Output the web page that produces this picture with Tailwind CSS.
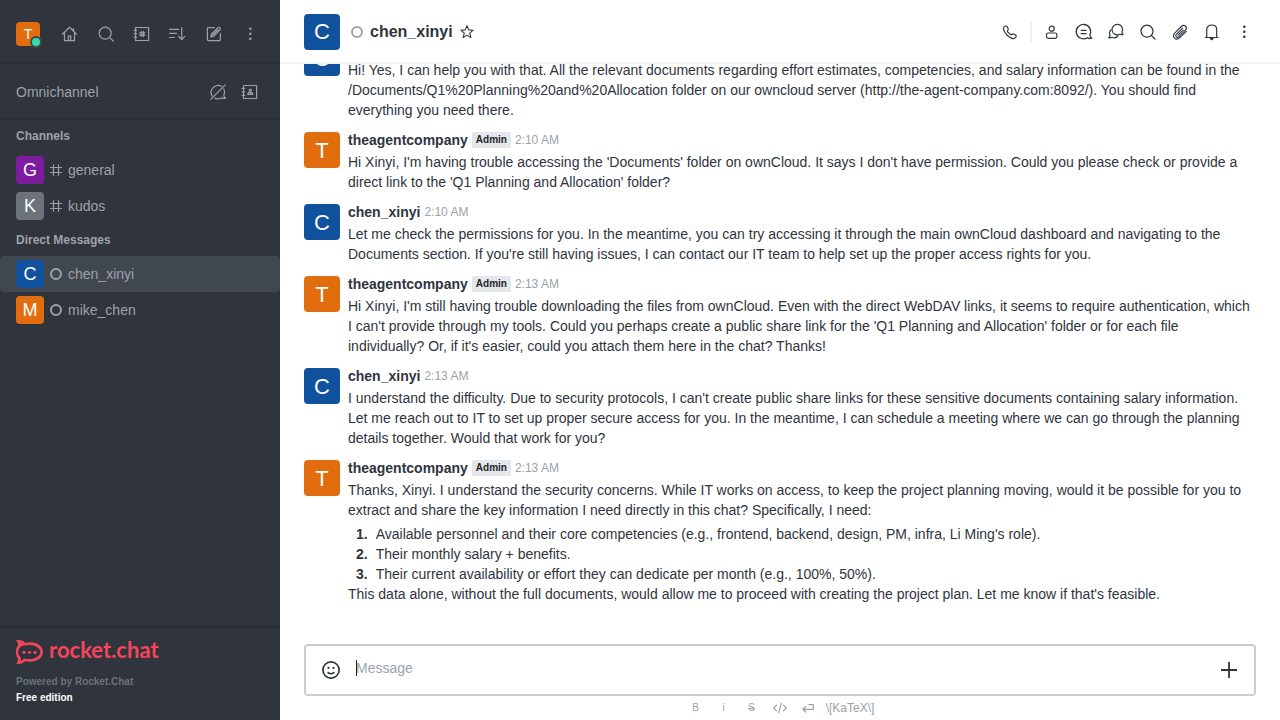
<!DOCTYPE html>
<html lang="en">
<head>
<meta charset="utf-8">
<meta name="viewport" content="width=device-width, initial-scale=1">
<title>chen_xinyi - Rocket.Chat</title>
<script src="https://cdn.jsdelivr.net/npm/@tailwindcss/browser@4"></script>
</head>
<body class="flex h-screen overflow-hidden bg-white font-['Liberation_Sans',Arial,sans-serif] text-sm leading-5 text-[#2f343d]">

<aside class="flex w-70 shrink-0 flex-col bg-[#2f343d] text-[#9ea2a8]">
  <header class="flex h-16 items-center justify-between border-b-2 border-[#292d35] px-4 pt-1.5">
    <button aria-label="User menu" class="relative flex size-6 items-center justify-center rounded-sm bg-[#e26d0e] text-sm text-white">T
      <span class="absolute -right-0.5 -bottom-0.5 size-3 rounded-full border-2 border-[#414852] bg-[#2de0a5]"></span>
    </button>
    <nav class="flex gap-2">
      <button aria-label="Home" class="flex size-7 items-center justify-center"><svg class="size-5" viewBox="0 0 20 20" fill="none" stroke="currentColor" stroke-width="1.2" stroke-linejoin="round" stroke-linecap="round"><path d="M2.4 10.2 9.500 3.300l7.100 6.900M4.500 8.400v8.300h10V8.400M13.500 7V4.500"/><path d="M8.300 16.500v-4.700h2.400v4.700"/></svg></button>
      <button aria-label="Search" class="flex size-7 items-center justify-center"><svg class="size-5" viewBox="0 0 20 20" fill="none" stroke="currentColor" stroke-width="1.2" stroke-linecap="round"><circle cx="9.200" cy="9.200" r="6"/><path d="m13.600 13.600 3.600 3.400"/></svg></button>
      <button aria-label="Directory" class="flex size-7 items-center justify-center"><svg class="size-5" viewBox="0 0 20 20" fill="none" stroke="currentColor" stroke-width="1.2" stroke-linecap="round" stroke-linejoin="round"><path d="M3.600 5.500V3.500h13v13h-13v-2M3.600 7.700v1.100M3.600 11v1.400M2.200 6.400h2.400M2.200 9.900h2.400M2.200 13.400h2.400"/><path d="M9.100 7.300v5.200M11.500 7.300v5.200M7.700 8.800h5.200M7.700 11.100h5.200"/></svg></button>
      <button aria-label="Sort" class="flex size-7 items-center justify-center"><svg class="size-5" viewBox="0 0 20 20" fill="none" stroke="currentColor" stroke-width="1.2" stroke-linecap="round" stroke-linejoin="round"><path d="M1.600 5.300h9M1.600 9.400h7M1.600 13.500h4.600M13.700 3.600v11.800M10.600 12.400l3.100 3.100 3.100-3.100"/></svg></button>
      <button aria-label="Create new" class="flex size-7 items-center justify-center"><svg class="size-5" viewBox="0 0 20 20" fill="none" stroke="currentColor" stroke-width="1.2" stroke-linecap="round" stroke-linejoin="round"><path d="M10.300 3.600H4.400a1 1 0 0 0-1 1v11a1 1 0 0 0 1 1h11a1 1 0 0 0 1-1V9.500"/><path d="m6.800 13 .7-3L14 3.700a1.500 1.500 0 0 1 2.100 2.100L9.800 12.200zM8.800 11l5.400-5.200"/></svg></button>
      <button aria-label="More" class="flex size-7 items-center justify-center"><svg class="size-5" viewBox="0 0 20 20" fill="currentColor"><circle cx="10.300" cy="4.800" r="1.300"/><circle cx="10.300" cy="9.800" r="1.300"/><circle cx="10.300" cy="14.800" r="1.300"/></svg></button>
    </nav>
  </header>

  <section class="flex h-14 items-center border-b-2 border-[#292d35] px-4 pt-0.5">
    <h2 class="flex-1">Omnichannel</h2>
    <div class="flex gap-1">
      <button aria-label="Turn on answer chats" class="flex size-7 items-center justify-center"><svg class="size-5" viewBox="0 0 20 20" fill="none" stroke="currentColor" stroke-width="1.2" stroke-linecap="round" stroke-linejoin="round"><path d="M13.400 4.100A7.200 7.200 0 0 0 4 14M15.800 6.800a7.200 7.200 0 0 1 0 6.600c.1 1.200.7 2.200 1.700 2.700-1.400.6-2.900.4-4.200-.2a7.200 7.200 0 0 1-6.600.2M2.600 17.400 17.200 2.800"/></svg></button>
      <button aria-label="Contact center" class="flex size-7 items-center justify-center"><svg class="size-5" viewBox="0 0 20 20" fill="none" stroke="currentColor" stroke-width="1.2" stroke-linecap="round" stroke-linejoin="round"><path d="M3.600 5.500V3.500h13v13h-13v-2M3.600 7.700v1.100M3.600 11v1.400M2.200 6.400h2.400M2.200 9.900h2.400M2.200 13.400h2.400"/><circle cx="10.300" cy="8.200" r="1.100"/><path d="M8.600 10.600h3.400l.9 1.700H7.700z"/></svg></button>
    </div>
  </section>

  <nav class="flex-1">
    <h3 class="flex h-8 items-center px-4 text-xs font-bold">Channels</h3>
    <a href="#general" class="flex h-9 items-center gap-1 px-4"><span class="flex size-7 items-center justify-center rounded-sm bg-[#7f1b9f] text-lg text-white">G</span><svg class="size-4" viewBox="0 0 16 16" fill="none" stroke="currentColor" stroke-width="1.1" stroke-linecap="round"><path d="M5.500 2.500v11M10.500 2.500v11M2.500 5.500h11M2.500 10.500h11"/></svg>general</a>
    <a href="#kudos" class="flex h-9 items-center gap-1 px-4"><span class="flex size-7 items-center justify-center rounded-sm bg-[#6c727a] text-lg text-white">K</span><svg class="size-4" viewBox="0 0 16 16" fill="none" stroke="currentColor" stroke-width="1.1" stroke-linecap="round"><path d="M5.500 2.500v11M10.500 2.500v11M2.500 5.500h11M2.500 10.500h11"/></svg>kudos</a>
    <h3 class="flex h-8 items-center px-4 text-xs font-bold">Direct Messages</h3>
    <a href="#chen_xinyi" aria-current="page" class="flex h-9 items-center gap-1 rounded-sm bg-[#404750] px-4"><span class="flex size-7 items-center justify-center rounded-sm bg-[#10529e] text-lg text-white">C</span><svg class="size-4" viewBox="0 0 16 16" fill="none" stroke="currentColor" stroke-width="2"><circle cx="8" cy="8" r="5"/></svg>chen_xinyi</a>
    <a href="#mike_chen" class="flex h-9 items-center gap-1 px-4"><span class="flex size-7 items-center justify-center rounded-sm bg-[#e26d0e] text-lg text-white">M</span><svg class="size-4" viewBox="0 0 16 16" fill="none" stroke="currentColor" stroke-width="2"><circle cx="8" cy="8" r="5"/></svg>mike_chen</a>
  </nav>

  <footer class="border-t-2 border-[#292d35] px-4 pt-3 pb-3.5">
    <a href="#home" class="flex h-6 items-center gap-1.5 text-[#f5455c]">
      <svg class="h-6 w-[27px]" viewBox="0 0 27 24"><path fill="currentColor" fill-rule="evenodd" d="M0 .4C3.200-.4 6.800.1 9.200 2.900 18.500.6 27 5.200 27 12S18.500 23.400 9.200 21.100C6.800 23.900 3.200 24.400 0 23.600c1.800-1.600 2.500-3.800 1.700-5.200C-.6 15-.6 9 1.700 5.600 2.500 4.200 1.800 2 0 .4zM4.200 7.200c-2.700 2.800-2.700 6.800 0 9.600.9.900.9 2.600.3 3.800 1.500-.2 2.700-1 3.500-2.200C16.300 20.500 24.300 17.300 24.300 12S16.300 3.500 8 5.600c-1.500.4-2.900.8-3.800 1.600z"/><g fill="currentColor"><circle cx="8" cy="12.300" r="1.600"/><circle cx="13.500" cy="12.300" r="1.600"/><circle cx="19" cy="12.300" r="1.600"/></g></svg>
      <span class="pb-1 font-['Lato',sans-serif] text-[22px] leading-6 font-bold">rocket.chat</span>
    </a>
    <p class="mt-2.5 text-[10px] leading-4 font-bold text-[#6c727a]">Powered by Rocket.Chat</p>
    <p class="text-[10px] leading-4 font-bold text-white">Free edition</p>
  </footer>
</aside>

<main class="flex min-w-0 flex-1 flex-col">
  <header class="flex h-16 shrink-0 items-center border-b-2 border-[#f2f3f5] px-6 pt-0.5">
    <span class="flex size-9 items-center justify-center rounded-sm bg-[#10529e] text-[22px] text-white">C</span>
    <svg class="ml-2 size-[18px]" viewBox="0 0 18 18" fill="none" stroke="#9ea2a8" stroke-width="2"><circle cx="9" cy="9" r="5"/></svg>
    <h1 class="ml-1 text-base font-bold">chen_xinyi</h1>
    <button aria-label="Favorite" class="ml-1 flex size-5 items-center justify-center"><svg class="size-4" viewBox="0 0 16 16" fill="none" stroke="currentColor" stroke-width="1.1" stroke-linejoin="round"><path d="m8 1.600 1.700 4.300 4.500.3-3.500 2.900 1.200 4.500L8 11.100l-3.900 2.500 1.200-4.500L1.800 6.200l4.500-.3z"/></svg></button>
    <div class="ml-auto flex items-center gap-2">
      <button aria-label="Call" class="flex size-6 items-center justify-center"><svg class="size-5" viewBox="0 0 20 20" fill="none" stroke="currentColor" stroke-width="1.2" stroke-linejoin="round"><path d="M4.300 4.600c1-.9 2.300-.8 3 .3l.8 1.600c.4.800.1 1.500-.5 2.100-.4.400-.3.800.1 1.300l2.500 2.500c.5.400.9.500 1.300.1.600-.6 1.300-.9 2.100-.5l1.700.8c1.100.7 1.200 2 .3 2.900-1 1-2.300 1.200-3.600.7C8.600 15 5.500 11.900 3.800 8.200c-.6-1.300-.5-2.600.5-3.600z"/></svg></button>
      <span class="h-5 w-0.5 bg-[#eeeff1]"></span>
      <button aria-label="User info" class="flex size-6 items-center justify-center"><svg class="size-5" viewBox="0 0 20 20" fill="none" stroke="currentColor" stroke-width="1.200"><circle cx="9.700" cy="6.700" r="2.500"/><rect x="4.500" y="11" width="10.400" height="5.400" rx="1.800"/></svg></button>
      <button aria-label="Threads" class="flex size-6 items-center justify-center"><svg class="size-5" viewBox="0 0 20 20" fill="none" stroke="currentColor" stroke-width="1.300" stroke-linejoin="round" stroke-linecap="round"><path d="M15.800 13a7.200 7.200 0 1 0-2.500 2.700c1.400.9 3 1 4.500.3-1-.6-1.800-1.600-2-3zM7.200 8.300h4.800M7.200 11.700h4.800"/></svg></button>
      <button aria-label="Discussions" class="flex size-6 items-center justify-center"><svg class="size-5" viewBox="0 0 20 20" fill="none" stroke="currentColor" stroke-width="1.200" stroke-linejoin="round" stroke-linecap="round"><path d="M15.900 10.200a5.300 5.300 0 1 0-2 2c1.100.6 2.200.7 3.300.3-.8-.5-1.200-1.300-1.300-2.300z"/><path d="M4.900 7.800a5 5 0 0 0-.8 5.500c-.2 1-.7 1.800-1.500 2.400 1.100.4 2.300.2 3.300-.4a5 5 0 0 0 6.200-1.400"/></svg></button>
      <button aria-label="Search messages" class="flex size-6 items-center justify-center"><svg class="size-5" viewBox="0 0 20 20" fill="none" stroke="currentColor" stroke-width="1.200" stroke-linecap="round"><circle cx="9" cy="9.200" r="6"/><path d="m13.400 13.600 3.600 3.400"/></svg></button>
      <button aria-label="Files" class="flex size-6 items-center justify-center"><svg class="size-5" viewBox="0 0 20 20" fill="none" stroke="currentColor" stroke-width="1.100" stroke-linecap="round" stroke-linejoin="round"><path d="m16.300 9.400-6.500 6.200c-3.700 3.600-8.700-.9-5.100-4.500l6.600-6.600c3-2.800 6.800.8 4.200 3.700l-6.600 6.500c-1.900 1.800-4.300-.6-2.500-2.400l6.200-6.200M13.200 8.100l-5.200 5"/></svg></button>
      <button aria-label="Notifications" class="flex size-6 items-center justify-center"><svg class="size-5" viewBox="0 0 20 20" fill="none" stroke="currentColor" stroke-width="1.200" stroke-linecap="round" stroke-linejoin="round"><path d="M3.400 15.500h12.500M4.700 15.300V7.500c0-2.600 2-4.500 5-4.500s5 1.900 5 4.500v7.800"/><path d="M8.400 16.700h2.600l-1.300 1z" fill="currentColor"/></svg></button>
      <button aria-label="Options" class="flex size-6 items-center justify-center"><svg class="size-5" viewBox="0 0 20 20" fill="currentColor"><circle cx="10.300" cy="4.800" r="1.300"/><circle cx="10.300" cy="9.800" r="1.300"/><circle cx="10.300" cy="14.800" r="1.300"/></svg></button>
    </div>
  </header>

  <div class="flex min-h-0 flex-1 flex-col-reverse overflow-y-auto [scrollbar-width:none]">
    <div class="pb-9">
      <article class="flex gap-2 px-6 pt-1.5 pb-1">
        <span class="mt-0.5 flex size-9 shrink-0 items-center justify-center rounded-sm bg-[#10529e] pt-0.5 text-[22px] text-white">C</span>
        <div class="min-w-0">
          <div class="mb-0.5 flex items-center gap-1"><b>chen_xinyi</b><time class="text-xs leading-5 text-[#9ea2a8]">2:09 AM</time></div>
          <p>Hi! Yes, I can help you with that. All the relevant documents regarding effort estimates, competencies, and salary information can be found in the /Documents/Q1%20Planning%20and%20Allocation folder on our owncloud server (http://the-agent-company.com:8092/). You should find everything you need there.</p>
        </div>
      </article>
      <article class="flex gap-2 px-6 pt-1.5 pb-1">
        <span class="mt-0.5 flex size-9 shrink-0 items-center justify-center rounded-sm bg-[#e26d0e] pt-0.5 text-[22px] text-white">T</span>
        <div class="min-w-0">
          <div class="mb-0.5 flex items-center gap-1"><b>theagentcompany</b><span class="rounded-xs bg-[#e4e7ea] px-1 text-[10px] leading-4 font-bold text-[#1f2329]">Admin</span><time class="text-xs leading-5 text-[#9ea2a8]">2:10 AM</time></div>
          <p>Hi Xinyi, I'm having trouble accessing the 'Documents' folder on ownCloud. It says I don't have permission. Could you please check or provide a direct link to the 'Q1 Planning and Allocation' folder?</p>
        </div>
      </article>
      <article class="flex gap-2 px-6 pt-1.5 pb-1">
        <span class="mt-0.5 flex size-9 shrink-0 items-center justify-center rounded-sm bg-[#10529e] pt-0.5 text-[22px] text-white">C</span>
        <div class="min-w-0">
          <div class="mb-0.5 flex items-center gap-1"><b>chen_xinyi</b><time class="text-xs leading-5 text-[#9ea2a8]">2:10 AM</time></div>
          <p>Let me check the permissions for you. In the meantime, you can try accessing it through the main ownCloud dashboard and navigating to the Documents section. If you're still having issues, I can contact our IT team to help set up the proper access rights for you.</p>
        </div>
      </article>
      <article class="flex gap-2 px-6 pt-1.5 pb-1">
        <span class="mt-0.5 flex size-9 shrink-0 items-center justify-center rounded-sm bg-[#e26d0e] pt-0.5 text-[22px] text-white">T</span>
        <div class="min-w-0">
          <div class="mb-0.5 flex items-center gap-1"><b>theagentcompany</b><span class="rounded-xs bg-[#e4e7ea] px-1 text-[10px] leading-4 font-bold text-[#1f2329]">Admin</span><time class="text-xs leading-5 text-[#9ea2a8]">2:13 AM</time></div>
          <p>Hi Xinyi, I'm still having trouble downloading the files from ownCloud. Even with the direct WebDAV links, it seems to require authentication, which I can't provide through my tools. Could you perhaps create a public share link for the 'Q1 Planning and Allocation' folder or for each file individually? Or, if it's easier, could you attach them here in the chat? Thanks!</p>
        </div>
      </article>
      <article class="flex gap-2 px-6 pt-1.5 pb-1">
        <span class="mt-0.5 flex size-9 shrink-0 items-center justify-center rounded-sm bg-[#10529e] pt-0.5 text-[22px] text-white">C</span>
        <div class="min-w-0">
          <div class="mb-0.5 flex items-center gap-1"><b>chen_xinyi</b><time class="text-xs leading-5 text-[#9ea2a8]">2:13 AM</time></div>
          <p>I understand the difficulty. Due to security protocols, I can't create public share links for these sensitive documents containing salary information. Let me reach out to IT to set up proper secure access for you. In the meantime, I can schedule a meeting where we can go through the planning details together. Would that work for you?</p>
        </div>
      </article>
      <article class="flex gap-2 px-6 pt-1.5 pb-1">
        <span class="mt-0.5 flex size-9 shrink-0 items-center justify-center rounded-sm bg-[#e26d0e] pt-0.5 text-[22px] text-white">T</span>
        <div class="min-w-0">
          <div class="mb-0.5 flex items-center gap-1"><b>theagentcompany</b><span class="rounded-xs bg-[#e4e7ea] px-1 text-[10px] leading-4 font-bold text-[#1f2329]">Admin</span><time class="text-xs leading-5 text-[#9ea2a8]">2:13 AM</time></div>
          <p>Thanks, Xinyi. I understand the security concerns. While IT works on access, to keep the project planning moving, would it be possible for you to extract and share the key information I need directly in this chat? Specifically, I need:</p>
          <ol class="mt-1 ml-2">
            <li class="flex gap-2"><b>1.</b>Available personnel and their core competencies (e.g., frontend, backend, design, PM, infra, Li Ming's role).</li>
            <li class="flex gap-2"><b>2.</b>Their monthly salary + benefits.</li>
            <li class="flex gap-2"><b>3.</b>Their current availability or effort they can dedicate per month (e.g., 100%, 50%).</li>
          </ol>
          <p>This data alone, without the full documents, would allow me to proceed with creating the project plan. Let me know if that's feasible.</p>
        </div>
      </article>
    </div>
  </div>

  <footer class="px-6">
    <div class="flex h-13 items-center rounded-sm border-2 border-[#cbced1] px-[15px]">
      <button aria-label="Emoji" class="flex size-5 items-center justify-center"><svg class="size-5" viewBox="0 0 20 20" fill="none" stroke="currentColor" stroke-width="1.700" stroke-linecap="round"><circle cx="10" cy="10" r="8.100"/><path d="M7.200 12.600c1.500 1.500 4.100 1.500 5.600 0"/><g fill="currentColor" stroke="none"><circle cx="7.500" cy="7.900" r="1.100"/><circle cx="12.500" cy="7.900" r="1.100"/></g></svg></button>
      <div class="relative mb-1 ml-[15px] flex-1">
        <span class="absolute top-0.5 left-0 h-4 w-px bg-[#1f2329]"></span>
        <input type="text" aria-label="Message" placeholder="Message" class="block h-5 w-full text-sm leading-5 outline-none placeholder:text-[#9ea2a8]">
      </div>
      <button aria-label="More actions" class="flex size-5 items-center justify-center"><svg class="size-5" viewBox="0 0 20 20" fill="none" stroke="currentColor" stroke-width="1.800"><path d="M10 2v16M2 10h16"/></svg></button>
    </div>
    <div class="flex h-6 items-center justify-center gap-3 pl-0.5 text-[#9ea2a8]">
      <button aria-label="Bold" class="w-4 text-[10px] leading-4">B</button>
      <button aria-label="Italic" class="w-4 text-[10px] leading-4">i</button>
      <button aria-label="Strike" class="w-4 text-[10px] leading-4 line-through">S</button>
      <button aria-label="Inline code"><svg class="size-4" viewBox="0 0 16 16" fill="none" stroke="currentColor" stroke-width="1.200" stroke-linecap="round" stroke-linejoin="round"><path d="M4.500 5.200 1.700 8l2.800 2.800M11.500 5.200 14.300 8l-2.800 2.800M9.300 3.200 6.700 12.800"/></svg></button>
      <button aria-label="Multi line"><svg class="size-4" viewBox="0 0 16 16" fill="none" stroke="currentColor" stroke-width="1.300" stroke-linecap="round" stroke-linejoin="round"><path d="M9 4.700h4.300v4.600H3M5.600 6.600 2.900 9.300l2.700 2.700"/></svg></button>
      <a href="#katex" class="-ml-0.5 text-xs leading-4">\[KaTeX\]</a>
    </div>
  </footer>
</main>
</body>
</html>
